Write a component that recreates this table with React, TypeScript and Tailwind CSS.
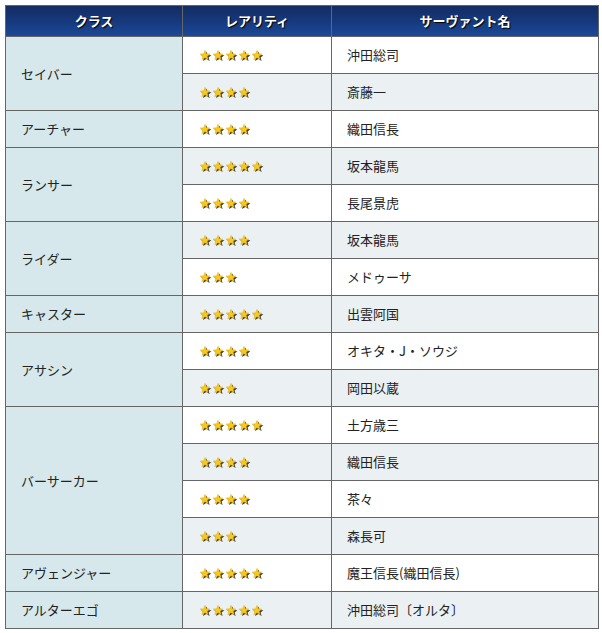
import React from 'react';

type Row = { cls?: string; span?: number; stars: number; name: string };

const rows: Row[] = [
  { cls: 'セイバー', span: 2, stars: 5, name: '沖田総司' },
  { stars: 4, name: '斎藤一' },
  { cls: 'アーチャー', span: 1, stars: 4, name: '織田信長' },
  { cls: 'ランサー', span: 2, stars: 5, name: '坂本龍馬' },
  { stars: 4, name: '長尾景虎' },
  { cls: 'ライダー', span: 2, stars: 4, name: '坂本龍馬' },
  { stars: 3, name: 'メドゥーサ' },
  { cls: 'キャスター', span: 1, stars: 5, name: '出雲阿国' },
  { cls: 'アサシン', span: 2, stars: 4, name: 'オキタ・J・ソウジ' },
  { stars: 3, name: '岡田以蔵' },
  { cls: 'バーサーカー', span: 4, stars: 5, name: '土方歳三' },
  { stars: 4, name: '織田信長' },
  { stars: 4, name: '茶々' },
  { stars: 3, name: '森長可' },
  { cls: 'アヴェンジャー', span: 1, stars: 5, name: '魔王信長(織田信長)' },
  { cls: 'アルターエゴ', span: 1, stars: 5, name: '沖田総司〔オルタ〕' },
];

const Star = () => (
  <svg width="13" height="13" viewBox="0 0 13 12" className="block">
    <path
      d="M6.5 1.5 L8 5 L11.6 5.2 L8.8 7.5 L9.8 11 L6.5 9 L3.2 11 L4.2 7.5 L1.4 5.2 L5 5 Z"
      fill="#3a3a3a"
      transform="translate(0.8 0.6)"
    />
    <path
      d="M6 0.8 L7.4 4.3 L11 4.5 L8.2 6.8 L9.2 10.3 L6 8.3 L2.8 10.3 L3.8 6.8 L1 4.5 L4.6 4.3 Z"
      fill="#f7c81e"
      stroke="#e0a800"
      strokeWidth="0.4"
    />
  </svg>
);

export default function App() {
  return (
    <div
      className="w-[602px] h-[633px] bg-white p-[5px] text-[13px] text-[#222]"
      style={{ fontFamily: '"Noto Sans CJK JP", "Noto Sans", sans-serif' }}
    >
      <table className="w-[593px] border-collapse table-fixed">
        <colgroup>
          <col className="w-[177px]" />
          <col className="w-[149px]" />
          <col className="w-[267px]" />
        </colgroup>
        <thead>
          <tr className="h-[31px] bg-gradient-to-b from-[#132c63] via-[#17397c] to-[#1c4a9c]">
            {['クラス', 'レアリティ', 'サーヴァント名'].map((h) => (
              <th
                key={h}
                className="border border-[#666] text-white font-bold text-[13px] text-center [text-shadow:1px_1px_1px_#000]"
              >
                {h}
              </th>
            ))}
          </tr>
        </thead>
        <tbody>
          {rows.map((r, i) => {
            const bg = i % 2 === 0 ? 'bg-white' : 'bg-[#ebf0f3]';
            return (
              <tr key={i} className="h-[37px]">
                {r.cls && (
                  <td
                    rowSpan={r.span}
                    className="border border-[#666] bg-[#d6e8ec] pl-[15px] align-middle"
                  >
                    {r.cls}
                  </td>
                )}
                <td className={`border border-[#666] ${bg} pl-[16px]`}>
                  <div className="flex">
                    {Array.from({ length: r.stars }).map((_, k) => (
                      <Star key={k} />
                    ))}
                  </div>
                </td>
                <td className={`border border-[#666] ${bg} pl-[15px]`}>{r.name}</td>
              </tr>
            );
          })}
        </tbody>
      </table>
    </div>
  );
}
